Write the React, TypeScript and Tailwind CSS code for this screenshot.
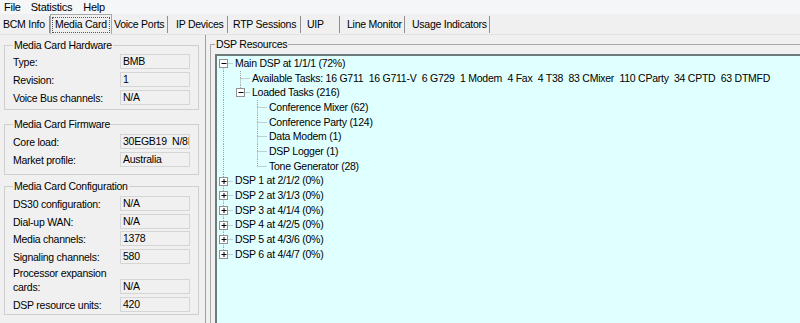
import React from 'react';

interface TabDef {
  label: string;
  w: number;
  pl: number;
  active?: boolean;
}

const tabs: TabDef[] = [
  { label: 'BCM Info', w: 50, pl: 3 },
  { label: 'Media Card', w: 62, pl: 4, active: true },
  { label: 'Voice Ports', w: 56, pl: 2 },
  { label: 'IP Devices', w: 60, pl: 8 },
  { label: 'RTP Sessions', w: 73, pl: 5 },
  { label: 'UIP', w: 39, pl: 6 },
  { label: 'Line Monitor', w: 65, pl: 7 },
  { label: 'Usage Indicators', w: 85, pl: 7 },
];

interface TreeNode {
  label: string;
  level: number;
  box?: 'plus' | 'minus';
  // columns (0..level-1) whose vertical line runs through this row
  through: number[];
  last: boolean;
  first?: boolean;
}

const tree: TreeNode[] = [
  { label: 'Main DSP at 1/1/1 (72%)', level: 0, box: 'minus', through: [], last: false, first: true },
  {
    label:
      'Available Tasks: 16 G711\u00a0\u00a016 G711-V\u00a0\u00a06 G729\u00a0\u00a01 Modem\u00a0\u00a04 Fax\u00a0\u00a04 T38\u00a0\u00a083 CMixer\u00a0\u00a0110 CParty\u00a0\u00a034 CPTD\u00a0\u00a063 DTMFD',
    level: 1,
    through: [0],
    last: false,
  },
  { label: 'Loaded Tasks (216)', level: 1, box: 'minus', through: [0], last: true },
  { label: 'Conference Mixer (62)', level: 2, through: [0], last: false },
  { label: 'Conference Party (124)', level: 2, through: [0], last: false },
  { label: 'Data Modem (1)', level: 2, through: [0], last: false },
  { label: 'DSP Logger (1)', level: 2, through: [0], last: false },
  { label: 'Tone Generator (28)', level: 2, through: [0], last: true },
  { label: 'DSP 1 at 2/1/2 (0%)', level: 0, box: 'plus', through: [], last: false },
  { label: 'DSP 2 at 3/1/3 (0%)', level: 0, box: 'plus', through: [], last: false },
  { label: 'DSP 3 at 4/1/4 (0%)', level: 0, box: 'plus', through: [], last: false },
  { label: 'DSP 4 at 4/2/5 (0%)', level: 0, box: 'plus', through: [], last: false },
  { label: 'DSP 5 at 4/3/6 (0%)', level: 0, box: 'plus', through: [], last: false },
  { label: 'DSP 6 at 4/4/7 (0%)', level: 0, box: 'plus', through: [], last: true },
];

const ROW_H = 14.7;
const LINE = '#a0a0a0';

function TreeRow({ node }: { node: TreeNode }) {
  const w = (node.level + 1) * 17;
  const cx = node.level * 17 + 6.5;
  const cy = 7.5;
  return (
    <div className="flex items-center h-[14.7px] whitespace-nowrap">
      <svg width={w} height={ROW_H} className="shrink-0 overflow-visible">
        {node.through.map((c) => (
          <line
            key={c}
            x1={c * 17 + 6.5}
            x2={c * 17 + 6.5}
            y1={0}
            y2={ROW_H}
            stroke={LINE}
            strokeDasharray="1 1"
          />
        ))}
        {!node.first && (
          <line x1={cx} x2={cx} y1={0} y2={cy} stroke={LINE} strokeDasharray="1 1" />
        )}
        {!node.last && (
          <line x1={cx} x2={cx} y1={cy} y2={ROW_H} stroke={LINE} strokeDasharray="1 1" />
        )}
        <line x1={cx} x2={cx + 10} y1={cy} y2={cy} stroke={LINE} strokeDasharray="1 1" />
        {node.box && (
          <g>
            <rect x={cx - 4} y={cy - 4} width={8} height={8} fill="#ffffff" stroke="#919191" />
            <line x1={cx - 2} x2={cx + 3} y1={cy} y2={cy} stroke="#000" />
            {node.box === 'plus' && (
              <line x1={cx + 0.5} x2={cx + 0.5} y1={cy - 2.5} y2={cy + 2.5} stroke="#000" />
            )}
          </g>
        )}
      </svg>
      <span className="ml-[1px] leading-[13px]">{node.label}</span>
    </div>
  );
}

function Field({ label, value }: { label: React.ReactNode; value: string }) {
  return (
    <div className="flex items-end">
      <div className="w-[107px] shrink-0 leading-[14px] whitespace-nowrap">{label}</div>
      <div className="w-[70px] h-[15px] border border-[#d5d5d5] bg-[#f0f0f0] px-[2px] leading-[13px] overflow-hidden whitespace-nowrap">
        {value}
      </div>
    </div>
  );
}

function GroupBox({
  title,
  className,
  children,
}: {
  title: string;
  className?: string;
  children: React.ReactNode;
}) {
  return (
    <fieldset className={`border border-[#cfcfcf] mx-[4px] px-[8px] w-[194px] ${className ?? ''}`}>
      <legend className="px-[1px] leading-[13px]">{title}</legend>
      {children}
    </fieldset>
  );
}

export default function App() {
  return (
    <div className="w-[800px] h-[323px] overflow-hidden bg-[#f0f0f0] text-black text-[10.5px] tracking-[-0.25px] font-['Liberation_Sans',Arial,sans-serif]">
      {/* Menu bar */}
      <div className="h-[14px] bg-[#f5f6f7] flex items-center text-[11px] leading-[14px] whitespace-nowrap">
        <span className="ml-[4px]">File</span>
        <span className="ml-[10px]">Statistics</span>
        <span className="ml-[11px]">Help</span>
      </div>

      {/* Tab strip */}
      <div className="h-[21px] flex items-end border-b border-[#e2e2e2] whitespace-nowrap">
        {tabs.map((t) => (
          <div
            key={t.label}
            style={{ width: t.w }}
            className={
              t.active
                ? 'h-[20px] shrink-0 flex items-center border border-b-0 border-[#a8a8a8] px-[1px]'
                : 'h-[17px] shrink-0 mb-[1px] flex items-center border-r border-[#8f8f8f]'
            }
          >
            {t.active ? (
              <span className="w-full h-[16px] flex items-center pl-[2px] border border-dotted border-[#555]">
                {t.label}
              </span>
            ) : (
              <span style={{ paddingLeft: t.pl }}>{t.label}</span>
            )}
          </div>
        ))}
      </div>

      <div className="flex">
        {/* Left panel */}
        <div className="w-[206px] h-[288px] border-r border-[#a0a0a0] shrink-0">
          <GroupBox title="Media Card Hardware" className="mt-[4px] pb-[4px]">
            <div className="mt-[2px] flex flex-col gap-[3px]">
              <Field label="Type:" value="BMB" />
              <Field label="Revision:" value="1" />
              <Field label="Voice Bus channels:" value="N/A" />
            </div>
          </GroupBox>

          <GroupBox title="Media Card Firmware" className="mt-[8px] pb-[7px]">
            <div className="mt-[3px] flex flex-col gap-[3px]">
              <Field label="Core load:" value={'30EGB19\u00a0\u00a0N/8I'} />
              <Field label="Market profile:" value="Australia" />
            </div>
          </GroupBox>

          <GroupBox title="Media Card Configuration" className="mt-[5px] pb-[2px]">
            <div className="mt-[3px] flex flex-col gap-[2.5px]">
              <Field label="DS30 configuration:" value="N/A" />
              <Field label="Dial-up WAN:" value="N/A" />
              <Field label="Media channels:" value="1378" />
              <Field label="Signaling channels:" value="580" />
              <Field
                label={
                  <>
                    Processor expansion
                    <br />
                    cards:
                  </>
                }
                value="N/A"
              />
              <Field label="DSP resource units:" value="420" />
            </div>
          </GroupBox>
        </div>

        {/* Right panel */}
        <div className="flex-1">
          <fieldset className="ml-[4px] mt-[3px] w-[620px] h-[300px] border border-[#a8a8a8] px-[4px]">
            <legend className="px-[1px] leading-[13px]">DSP Resources</legend>
            <div className="mt-[3px] h-[280px] bg-[#e0ffff] border-t-2 border-l-2 border-[#6f7b7b]">
              {tree.map((n, i) => (
                <TreeRow key={i} node={n} />
              ))}
            </div>
          </fieldset>
        </div>
      </div>
    </div>
  );
}
